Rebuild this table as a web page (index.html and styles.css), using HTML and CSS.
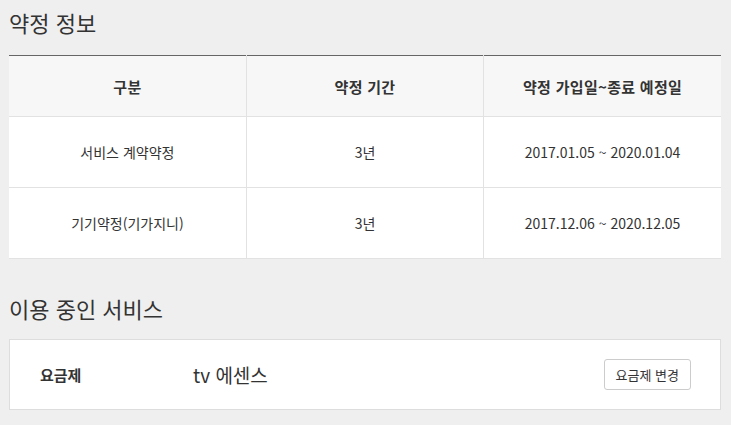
FILE: index.html
```html
<!DOCTYPE html>
<html lang="ko">
<head>
    <meta charset="UTF-8">
    <meta name="viewport" content="width=device-width, initial-scale=1.0">
    <title>약정 정보</title>
    <link rel="stylesheet" href="styles.css">
</head>
<body>
    <div class="page">
        <!-- 약정 정보 -->
        <h2 class="section-title">약정 정보</h2>
        <table class="contract-table">
            <thead>
                <tr>
                    <th>구분</th>
                    <th>약정 기간</th>
                    <th>약정 가입일~종료 예정일</th>
                </tr>
            </thead>
            <tbody>
                <tr>
                    <td>서비스 계약약정</td>
                    <td>3년</td>
                    <td>2017.01.05 ~ 2020.01.04</td>
                </tr>
                <tr>
                    <td>기기약정(기가지니)</td>
                    <td>3년</td>
                    <td>2017.12.06 ~ 2020.12.05</td>
                </tr>
            </tbody>
        </table>

        <!-- 이용 중인 서비스 -->
        <h2 class="section-title second">이용 중인 서비스</h2>
        <div class="service-box">
            <span class="service-label">요금제</span>
            <span class="service-name">tv 에센스</span>
            <button class="change-btn">요금제 변경</button>
        </div>
    </div>
</body>
</html>
```

FILE: styles.css
```css
body {
    margin: 0;
    background-color: #efefef;
    font-family: "Noto Sans CJK KR", "Noto Sans", sans-serif;
    color: #333;
}
.page {
    width: 712px;
    padding: 10px 0 0 9px;
}
.section-title {
    margin: 0;
    font-size: 22px;
    font-weight: 400;
    line-height: 24px;
    color: #333;
}
.section-title.second {
    margin-top: 37px;
}
.contract-table {
    width: 100%;
    margin-top: 21px;
    border-collapse: collapse;
    background-color: #fff;
    table-layout: fixed;
    border-top: 1px solid #666;
    font-size: 14px;
}
.contract-table th,
.contract-table td {
    text-align: center;
    border: 1px solid #e2e2e2;
    padding: 0;
}
.contract-table tr > :first-child {
    border-left: none;
}
.contract-table tr > :last-child {
    border-right: none;
}
.contract-table th {
    height: 60px;
    background-color: #f7f7f7;
    font-size: 15px;
    font-weight: 700;
    letter-spacing: 0.3px;
    border-top: none;
}
.contract-table td {
    height: 70px;
}
.service-box {
    display: flex;
    align-items: center;
    margin-top: 19px;
    height: 69px;
    padding: 0 29px 0 30px;
    background-color: #fff;
    border: 1px solid #ddd;
}
.service-label {
    width: 153px;
    font-size: 15px;
    font-weight: 700;
}
.service-name {
    flex: 1;
    font-size: 19px;
}
.change-btn {
    height: 31px;
    padding: 0 11px;
    background-color: #fff;
    border: 1px solid #ccc;
    border-radius: 3px;
    font-family: inherit;
    font-size: 13px;
    color: #333;
}
```
